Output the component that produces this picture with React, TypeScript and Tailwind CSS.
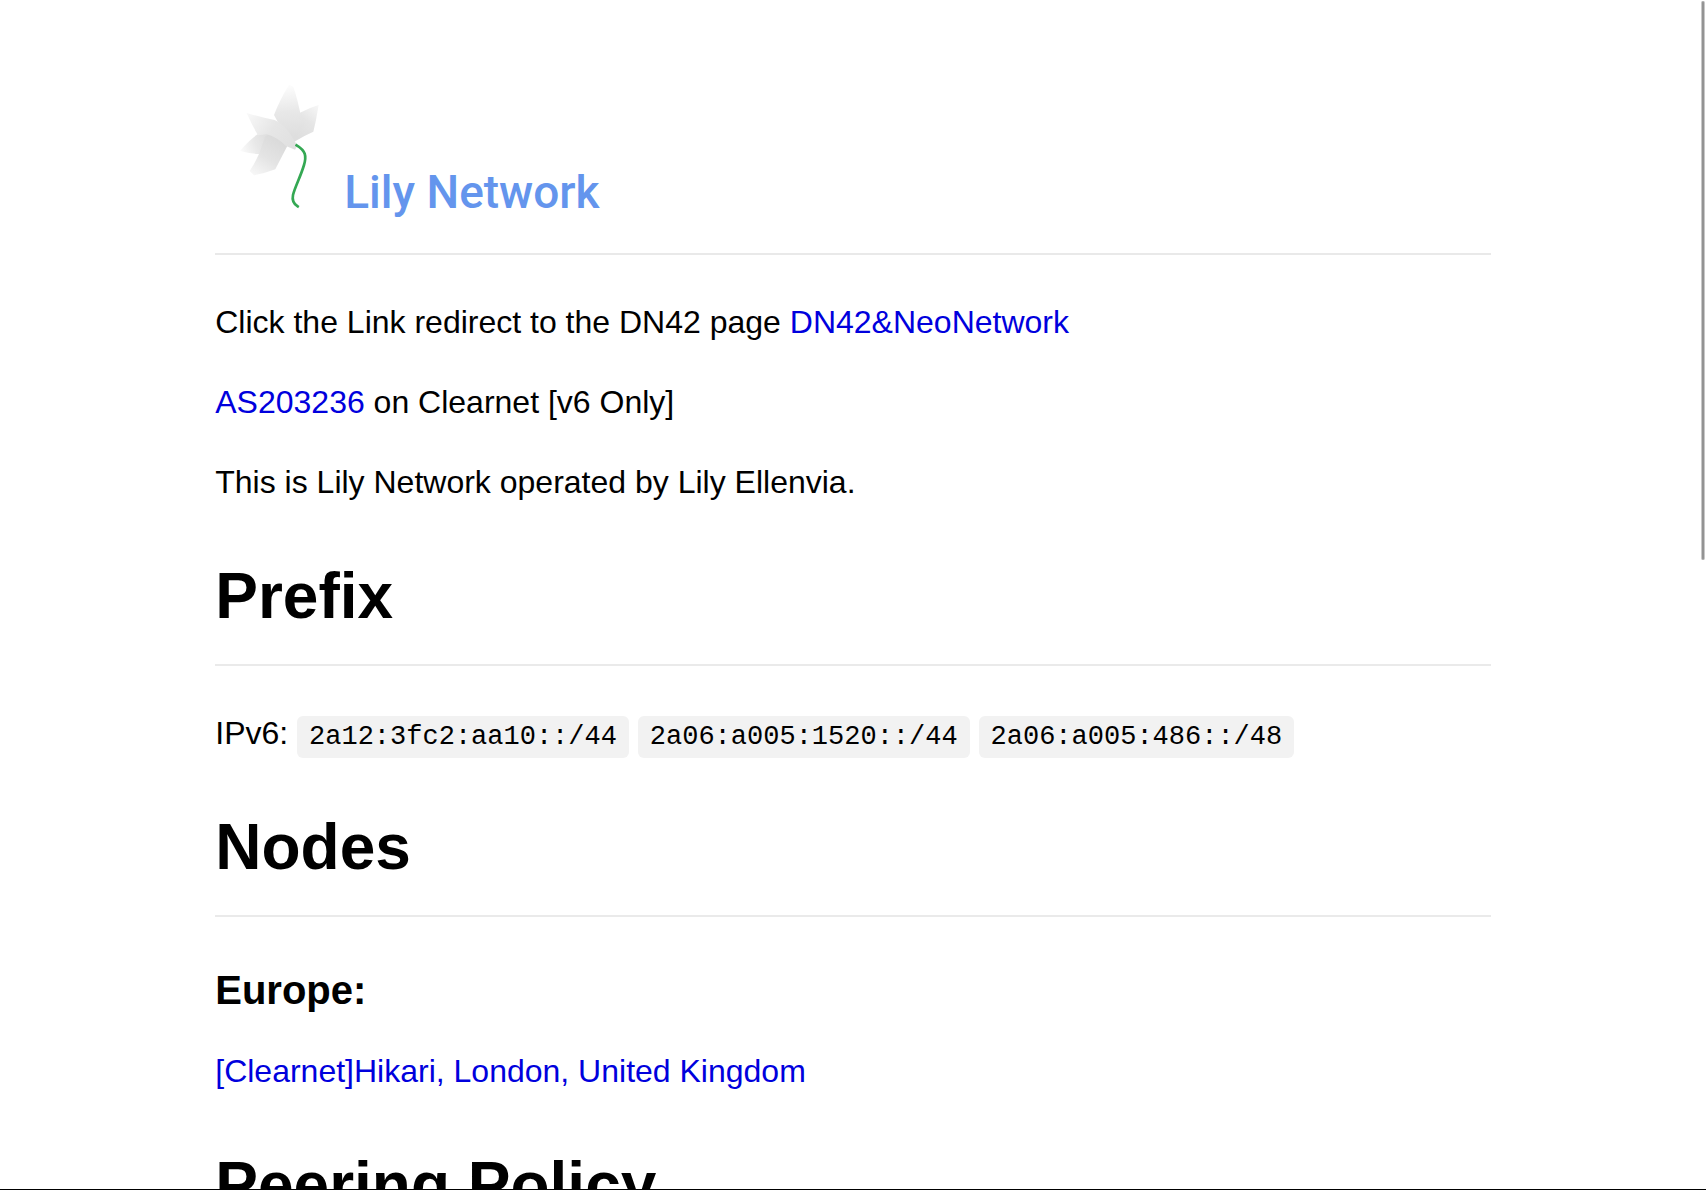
import type { ReactNode } from "react";

const linkClass = "text-[#0000dd] no-underline hover:underline";

function SectionTitle({ children }: { children: ReactNode }) {
  return (
    <h1 className="border-b-2 border-[#eaeaea] pb-5 text-[64px] leading-[95px] font-bold">
      {children}
    </h1>
  );
}

function Prefix({ children }: { children: ReactNode }) {
  return (
    <code className="rounded-md bg-[#f2f2f2] px-3 py-1.5 font-['Liberation_Mono',monospace] text-[27px] leading-none">
      {children}
    </code>
  );
}

function LilyFlower() {
  return (
    <svg className="h-[126px] w-20" viewBox="120 42 240 378" fill="none" aria-hidden="true">
      <defs>
        <linearGradient id="petal-top" x1="268" y1="48" x2="280" y2="200" gradientUnits="userSpaceOnUse">
          <stop offset="0" stopColor="#fcfcfc" />
          <stop offset="0.5" stopColor="#e8e8e8" />
          <stop offset="1" stopColor="#dedede" />
        </linearGradient>
        <linearGradient id="petal-right" x1="358" y1="105" x2="285" y2="200" gradientUnits="userSpaceOnUse">
          <stop offset="0" stopColor="#f8f8f8" />
          <stop offset="0.5" stopColor="#e5e5e5" />
          <stop offset="1" stopColor="#dedede" />
        </linearGradient>
        <linearGradient id="petal-left" x1="142" y1="133" x2="285" y2="230" gradientUnits="userSpaceOnUse">
          <stop offset="0" stopColor="#f8f8f8" />
          <stop offset="0.5" stopColor="#e6e6e6" />
          <stop offset="1" stopColor="#e0e0e0" />
        </linearGradient>
        <linearGradient id="petal-low" x1="122" y1="242" x2="215" y2="205" gradientUnits="userSpaceOnUse">
          <stop offset="0" stopColor="#fbfbfb" />
          <stop offset="0.5" stopColor="#e8e8e8" />
          <stop offset="1" stopColor="#dcdcdc" />
        </linearGradient>
        <linearGradient id="petal-bottom" x1="158" y1="316" x2="230" y2="205" gradientUnits="userSpaceOnUse">
          <stop offset="0" stopColor="#f8f8f8" />
          <stop offset="0.5" stopColor="#e4e4e4" />
          <stop offset="1" stopColor="#dadada" />
        </linearGradient>
        <filter id="petal-soft" x="-10%" y="-10%" width="120%" height="120%">
          <feGaussianBlur stdDeviation="1.5" />
        </filter>
      </defs>
      <g filter="url(#petal-soft)">
        <path d="M120 243 Q150 206 178 190 L240 190 L250 235 L178 252 Q150 251 120 243Z" fill="url(#petal-low)" />
        <path d="M262 228 L215 188 L195 200 L178 250 Q165 279 149 303 L162 316 Q198 309 226 298 Q240 270 262 228Z" fill="url(#petal-bottom)" />
        <path d="M283 215 L262 184 L278 150 L300 128 Q326 114 356 105 L348 150 L340 185 Q310 198 283 215Z" fill="url(#petal-right)" />
        <path d="M283 215 L250 187 L222 135 Q238 92 267 44 L280 50 Q292 85 301 130 L312 165 L283 215Z" fill="url(#petal-top)" />
        <path d="M140 129 Q184 142 224 150 Q250 162 267 187 L284 213 L292 228 L285 239 L258 228 Q232 202 200 193 L174 196 Q155 164 140 129Z" fill="url(#petal-left)" />
      </g>
      <path d="M290 226 C317 242 320 258 312 285 C301 322 285 350 279 375 C275 394 283 403 293 409" stroke="#34a853" strokeWidth="8" strokeLinecap="square" />
    </svg>
  );
}

export default function App() {
  return (
    <div className="relative h-screen overflow-hidden border-b border-black bg-white font-['Liberation_Sans',Arial,sans-serif] text-[32px] leading-[48px] text-black">
      <div className="h-full overflow-y-auto [scrollbar-width:none]">
        <div className="mx-auto flex w-3/4 flex-col gap-[43px] px-0.5 pt-[84px] pb-20">
          <header className="border-b-2 border-[#e9e9e9] pb-[43px] pl-[25px]">
            <a href="#home" className="flex items-end gap-6 text-[#6495ed]">
              <LilyFlower />
              <span className="font-['Roboto','Liberation_Sans',sans-serif] text-[46px] leading-9 font-medium">
                Lily Network
              </span>
            </a>
          </header>
          <div className="flex flex-col gap-8">
            <p>
              Click the Link redirect to the DN42 page{" "}
              <a href="#dn42" className={linkClass}>DN42&amp;NeoNetwork</a>
            </p>
            <p>
              <a href="#as203236" className={linkClass}>AS203236</a> on Clearnet [v6 Only]
            </p>
            <p>This is Lily Network operated by Lily Ellenvia.</p>
          </div>
          <SectionTitle>Prefix</SectionTitle>
          <p>
            IPv6: <Prefix>2a12:3fc2:aa10::/44</Prefix> <Prefix>2a06:a005:1520::/44</Prefix>{" "}
            <Prefix>2a06:a005:486::/48</Prefix>
          </p>
          <SectionTitle>Nodes</SectionTitle>
          <div className="flex flex-col gap-[27px]">
            <h3 className="text-[40px] leading-[60px] font-bold">Europe:</h3>
            <p>
              <a href="#hikari" className={linkClass}>[Clearnet]Hikari, London, United Kingdom</a>
            </p>
          </div>
          <SectionTitle>Peering Policy</SectionTitle>
        </div>
      </div>
      <div className="absolute top-px right-px h-[559px] w-1 rounded-full border-x border-[#c8c8c8] bg-[#939393]" />
    </div>
  );
}
